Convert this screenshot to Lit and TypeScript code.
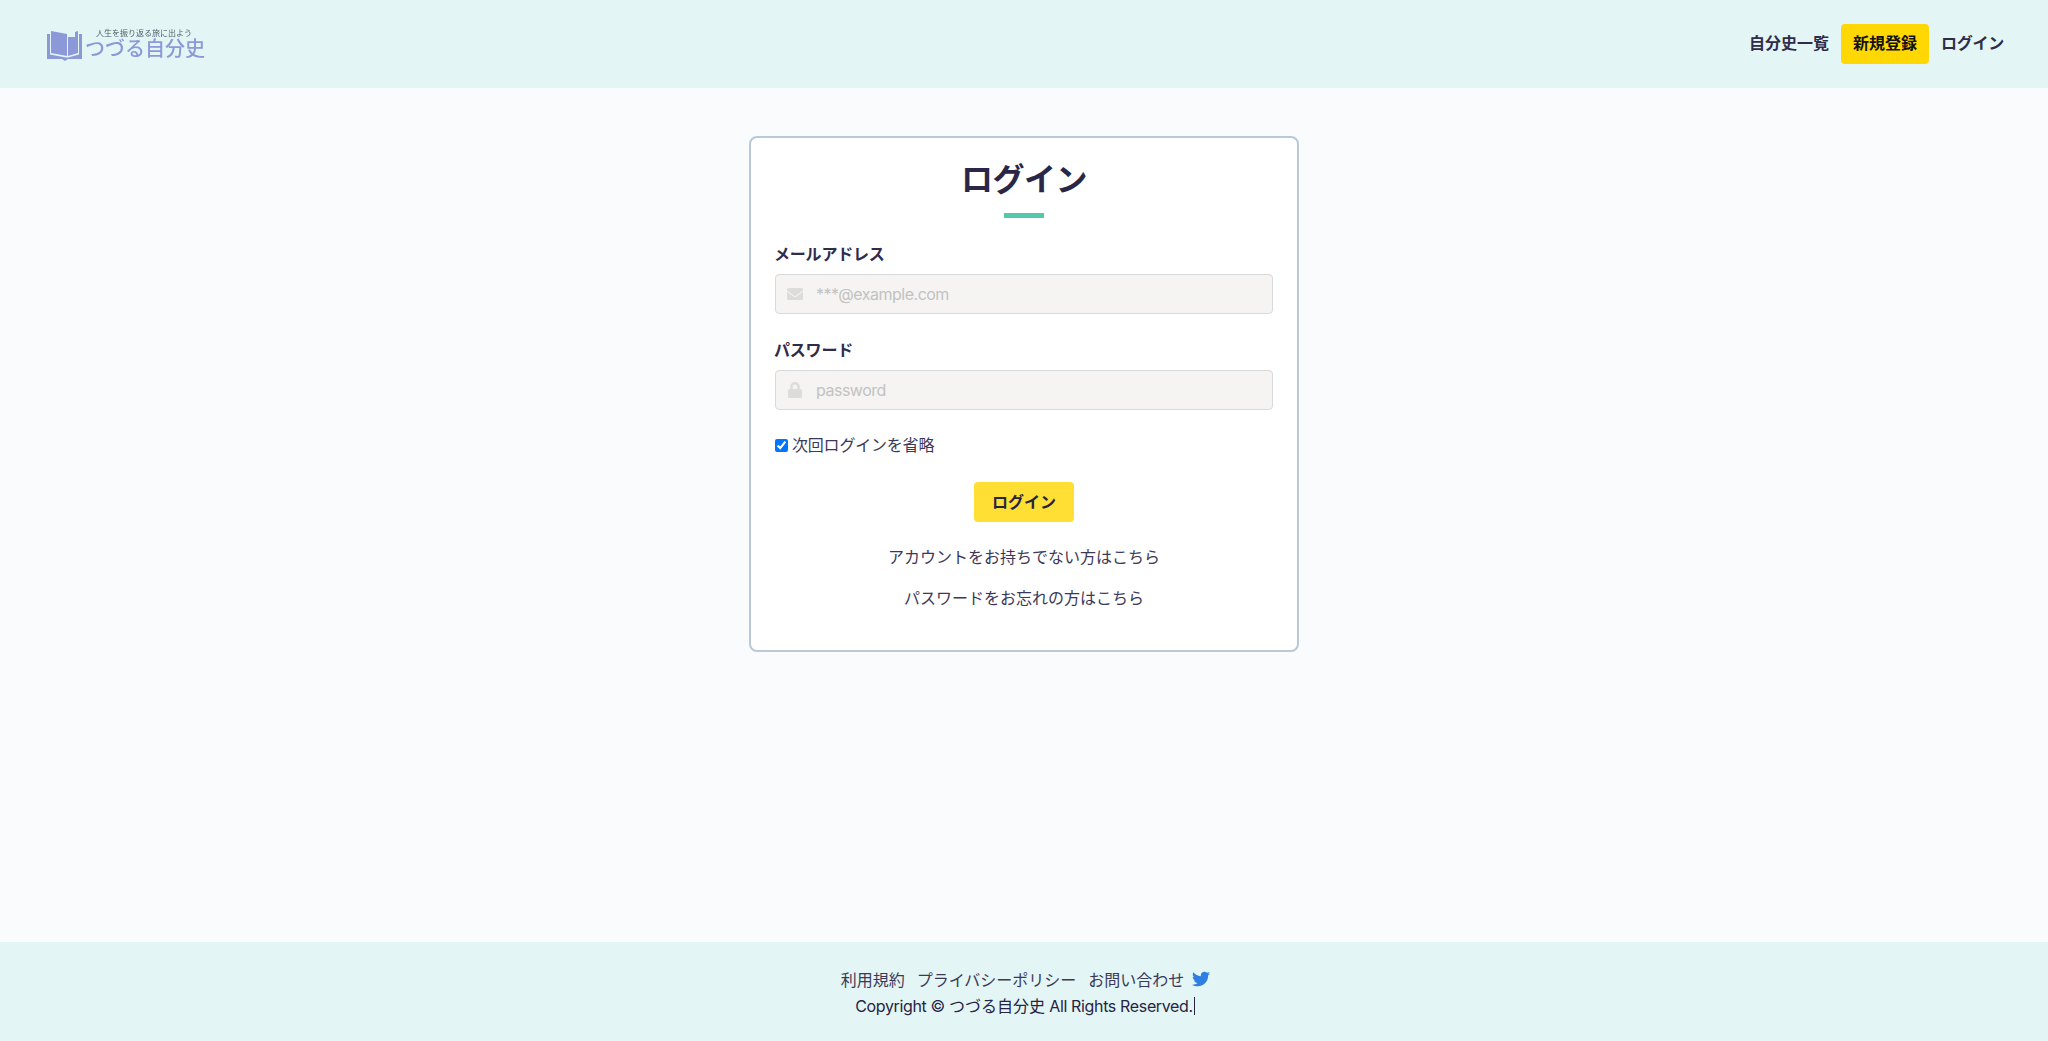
import { LitElement, html, css } from "lit";
import { customElement } from "lit/decorators.js";

@customElement("app-root")
export class AppRoot extends LitElement {
  static styles = css`
    :host {
      display: flex;
      flex-direction: column;
      min-height: 100vh;
      background: #f9fbfd;
      color: #272343;
      font-family: Inter, "Noto Sans CJK JP", sans-serif;
      font-size: 16px;
      line-height: 26px;
    }
    * { box-sizing: border-box; }
    a { color: inherit; text-decoration: none; }
    header {
      height: 88px;
      background: #e3f6f5;
      display: flex;
      align-items: center;
      justify-content: space-between;
      padding: 0 32px 0 47px;
    }
    .logo { display: flex; align-items: flex-end; gap: 3px; color: #8b99d8; filter: blur(0.35px); }
    .logo svg { width: 35px; height: 31px; display: block; }
    .logo-text { display: flex; flex-direction: column; align-items: flex-end; }
    .tag { font-size: 8px; line-height: 10px; color: #4f5f68; margin-right: 13px; white-space: nowrap; }
    .name { font-size: 20px; line-height: 23px; font-weight: 500; white-space: nowrap; }
    nav { display: flex; align-items: center; font-weight: 700; }
    nav a { padding: 6px 12px; height: 40px; border-radius: 4px; color: #2f2c4a; }
    nav a.reg { background: #ffd803; color: #111; }
    nav a.in { letter-spacing: -0.25px; }
    main { flex: 1; display: flex; justify-content: center; align-items: flex-start; padding-top: 48px; }
    .card {
      width: 550px;
      background: #fff;
      border: 2px solid #b9c9d8;
      border-radius: 8px;
      padding: 16px 24px 39px;
    }
    h1 { margin: 0; font-size: 32px; line-height: 51px; font-weight: 700; text-align: center; letter-spacing: -0.5px; color: #2a2648; }
    .bar { width: 40px; height: 5px; background: #52c9a8; margin: 8px auto 22px; }
    label.t { display: block; font-weight: 700; margin: 0 0 7px -1px; padding-top: 1px; letter-spacing: -0.2px; color: #2f2c4a; }
    .field { position: relative; margin-bottom: 22px; }
    .field input {
      display: block;
      width: 100%;
      height: 40px;
      padding: 0 12px 0 40px;
      background: #f5f4f2;
      border: 1px solid #d9dadb;
      border-radius: 4px;
      font: inherit;
      color: #272343;
      outline: none;
    }
    .field input::placeholder { color: #c2c2c2; opacity: 1; letter-spacing: -0.5px; }
    .icon { position: absolute; fill: #dcdcdc; display: block; }
    .mail { left: 12px; bottom: 12px; width: 16px; height: 16px; }
    .lock { left: 13px; bottom: 12px; width: 14px; height: 16px; }
    .remember { display: flex; align-items: center; height: 26px; margin-bottom: 24px; color: #3c3958; letter-spacing: -0.2px; }
    .remember input { width: 13px; height: 13px; margin: 0 4px 0 0; }
    .actions { display: flex; justify-content: center; }
    button {
      width: 100px;
      height: 40px;
      background: #ffdf34;
      border: 0;
      border-radius: 4px;
      font: inherit;
      font-weight: 700;
      color: #272343;
      padding: 0;
    }
    .links { display: flex; flex-direction: column; align-items: center; gap: 15px; margin-top: 22px; color: #3c3958; }
    footer {
      height: 99px;
      background: #e3f6f5;
      display: flex;
      flex-direction: column;
      align-items: center;
      padding-top: 25px;
    }
    .flinks { display: flex; align-items: center; gap: 12px; height: 26px; padding-left: 3px; color: #3c3958; }
    .flinks svg { width: 18px; height: 18px; fill: #2f7fe2; display: block; margin: -2px 0 0 -4px; }
    .copy { display: flex; align-items: center; height: 25px; white-space: pre; padding-left: 2px; }
    .lat { letter-spacing: -0.35px; }
    .caret { display: inline-block; width: 1px; height: 18px; background: #272343; margin-left: 1px; }
  `;

  render() {
    return html`
      <header>
        <a class="logo" href="#">
          <svg viewBox="0 0 35 31" aria-hidden="true">
            <path fill="currentColor" d="M4 1 L20 4 L20 26 L4 23 Z M21 7 L28 7 L28 2 L31 1 L31 23 L21 26 Z"/>
            <path fill="currentColor" d="M0 4 L3 4 L3 24.500 L19 27.500 L21 27.500 L32 24.500 L32 4 L35 4 L35 29 L21 29 L18 31 L15 29 L0 29 Z"/>
          </svg>
          <span class="logo-text">
            <span class="tag">人生を振り返る旅に出よう</span>
            <span class="name">つづる自分史</span>
          </span>
        </a>
        <nav>
          <a href="#">自分史一覧</a>
          <a class="reg" href="#">新規登録</a>
          <a class="in" href="#">ログイン</a>
        </nav>
      </header>
      <main>
        <form class="card">
          <h1>ログイン</h1>
          <div class="bar"></div>
          <label class="t">メールアドレス</label>
          <div class="field">
            <input type="email" placeholder="***@example.com" />
            <svg class="icon mail" viewBox="0 0 512 512"><path d="M502.300 190.800c3.900-3.100 9.700-.2 9.700 4.700V400c0 26.500-21.500 48-48 48H48c-26.500 0-48-21.500-48-48V195.600c0-5 5.700-7.800 9.700-4.700 22.400 17.400 52.100 39.500 154.100 113.600 21.100 15.400 56.700 47.800 92.200 47.600 35.700.3 72-32.800 92.300-47.600 102-74.100 131.600-96.300 154-113.700zM256 320c23.200.4 56.600-29.200 73.400-41.400 132.700-96.300 142.800-104.700 173.400-128.700 5.800-4.500 9.200-11.500 9.200-18.900v-19c0-26.500-21.500-48-48-48H48C21.500 64 0 85.500 0 112v19c0 7.400 3.400 14.300 9.200 18.900 30.600 23.900 40.700 32.400 173.400 128.700 16.800 12.200 50.200 41.800 73.400 41.400z"/></svg>
          </div>
          <label class="t">パスワード</label>
          <div class="field">
            <input type="password" placeholder="password" />
            <svg class="icon lock" viewBox="0 0 448 512"><path d="M400 224h-24v-72C376 68.200 307.800 0 224 0S72 68.200 72 152v72H48c-26.500 0-48 21.500-48 48v192c0 26.500 21.500 48 48 48h352c26.500 0 48-21.500 48-48V272c0-26.500-21.500-48-48-48zm-104 0H152v-72c0-39.700 32.300-72 72-72s72 32.300 72 72v72z"/></svg>
          </div>
          <label class="remember"><input type="checkbox" checked />次回ログインを省略</label>
          <div class="actions"><button type="button">ログイン</button></div>
          <div class="links">
            <a href="#">アカウントをお持ちでない方はこちら</a>
            <a href="#">パスワードをお忘れの方はこちら</a>
          </div>
        </form>
      </main>
      <footer>
        <div class="flinks">
          <a href="#">利用規約</a>
          <a href="#">プライバシーポリシー</a>
          <a href="#">お問い合わせ</a>
          <a href="#"><svg viewBox="0 0 512 512"><path d="M459.370 151.716c.325 4.548.325 9.097.325 13.645 0 138.720-105.583 298.558-298.558 298.558-59.452 0-114.680-17.219-161.137-47.106 8.447.974 16.568 1.299 25.340 1.299 49.055 0 94.213-16.568 130.274-44.832-46.132-.975-84.792-31.188-98.112-72.772 6.498.974 12.995 1.624 19.818 1.624 9.421 0 18.843-1.300 27.614-3.573-48.081-9.747-84.143-51.980-84.143-102.985v-1.299c13.969 7.797 30.214 12.670 47.431 13.319-28.264-18.843-46.781-51.005-46.781-87.391 0-19.492 5.197-37.360 14.294-52.954 51.655 63.675 129.300 105.258 216.365 109.807-1.624-7.797-2.599-15.918-2.599-24.040 0-57.828 46.782-104.934 104.934-104.934 30.213 0 57.502 12.670 76.670 33.137 23.715-4.548 46.456-13.645 66.599-25.665-7.798 24.366-24.366 44.833-46.132 57.827 21.117-2.273 41.584-8.122 60.426-16.243-14.292 20.791-32.161 39.308-52.628 54.253z"/></svg></a>
        </div>
        <div class="copy"><span class="lat">Copyright © </span><span>つづる自分史</span><span class="lat"> All Rights Reserved.</span><span class="caret"></span></div>
      </footer>
    `;
  }
}
